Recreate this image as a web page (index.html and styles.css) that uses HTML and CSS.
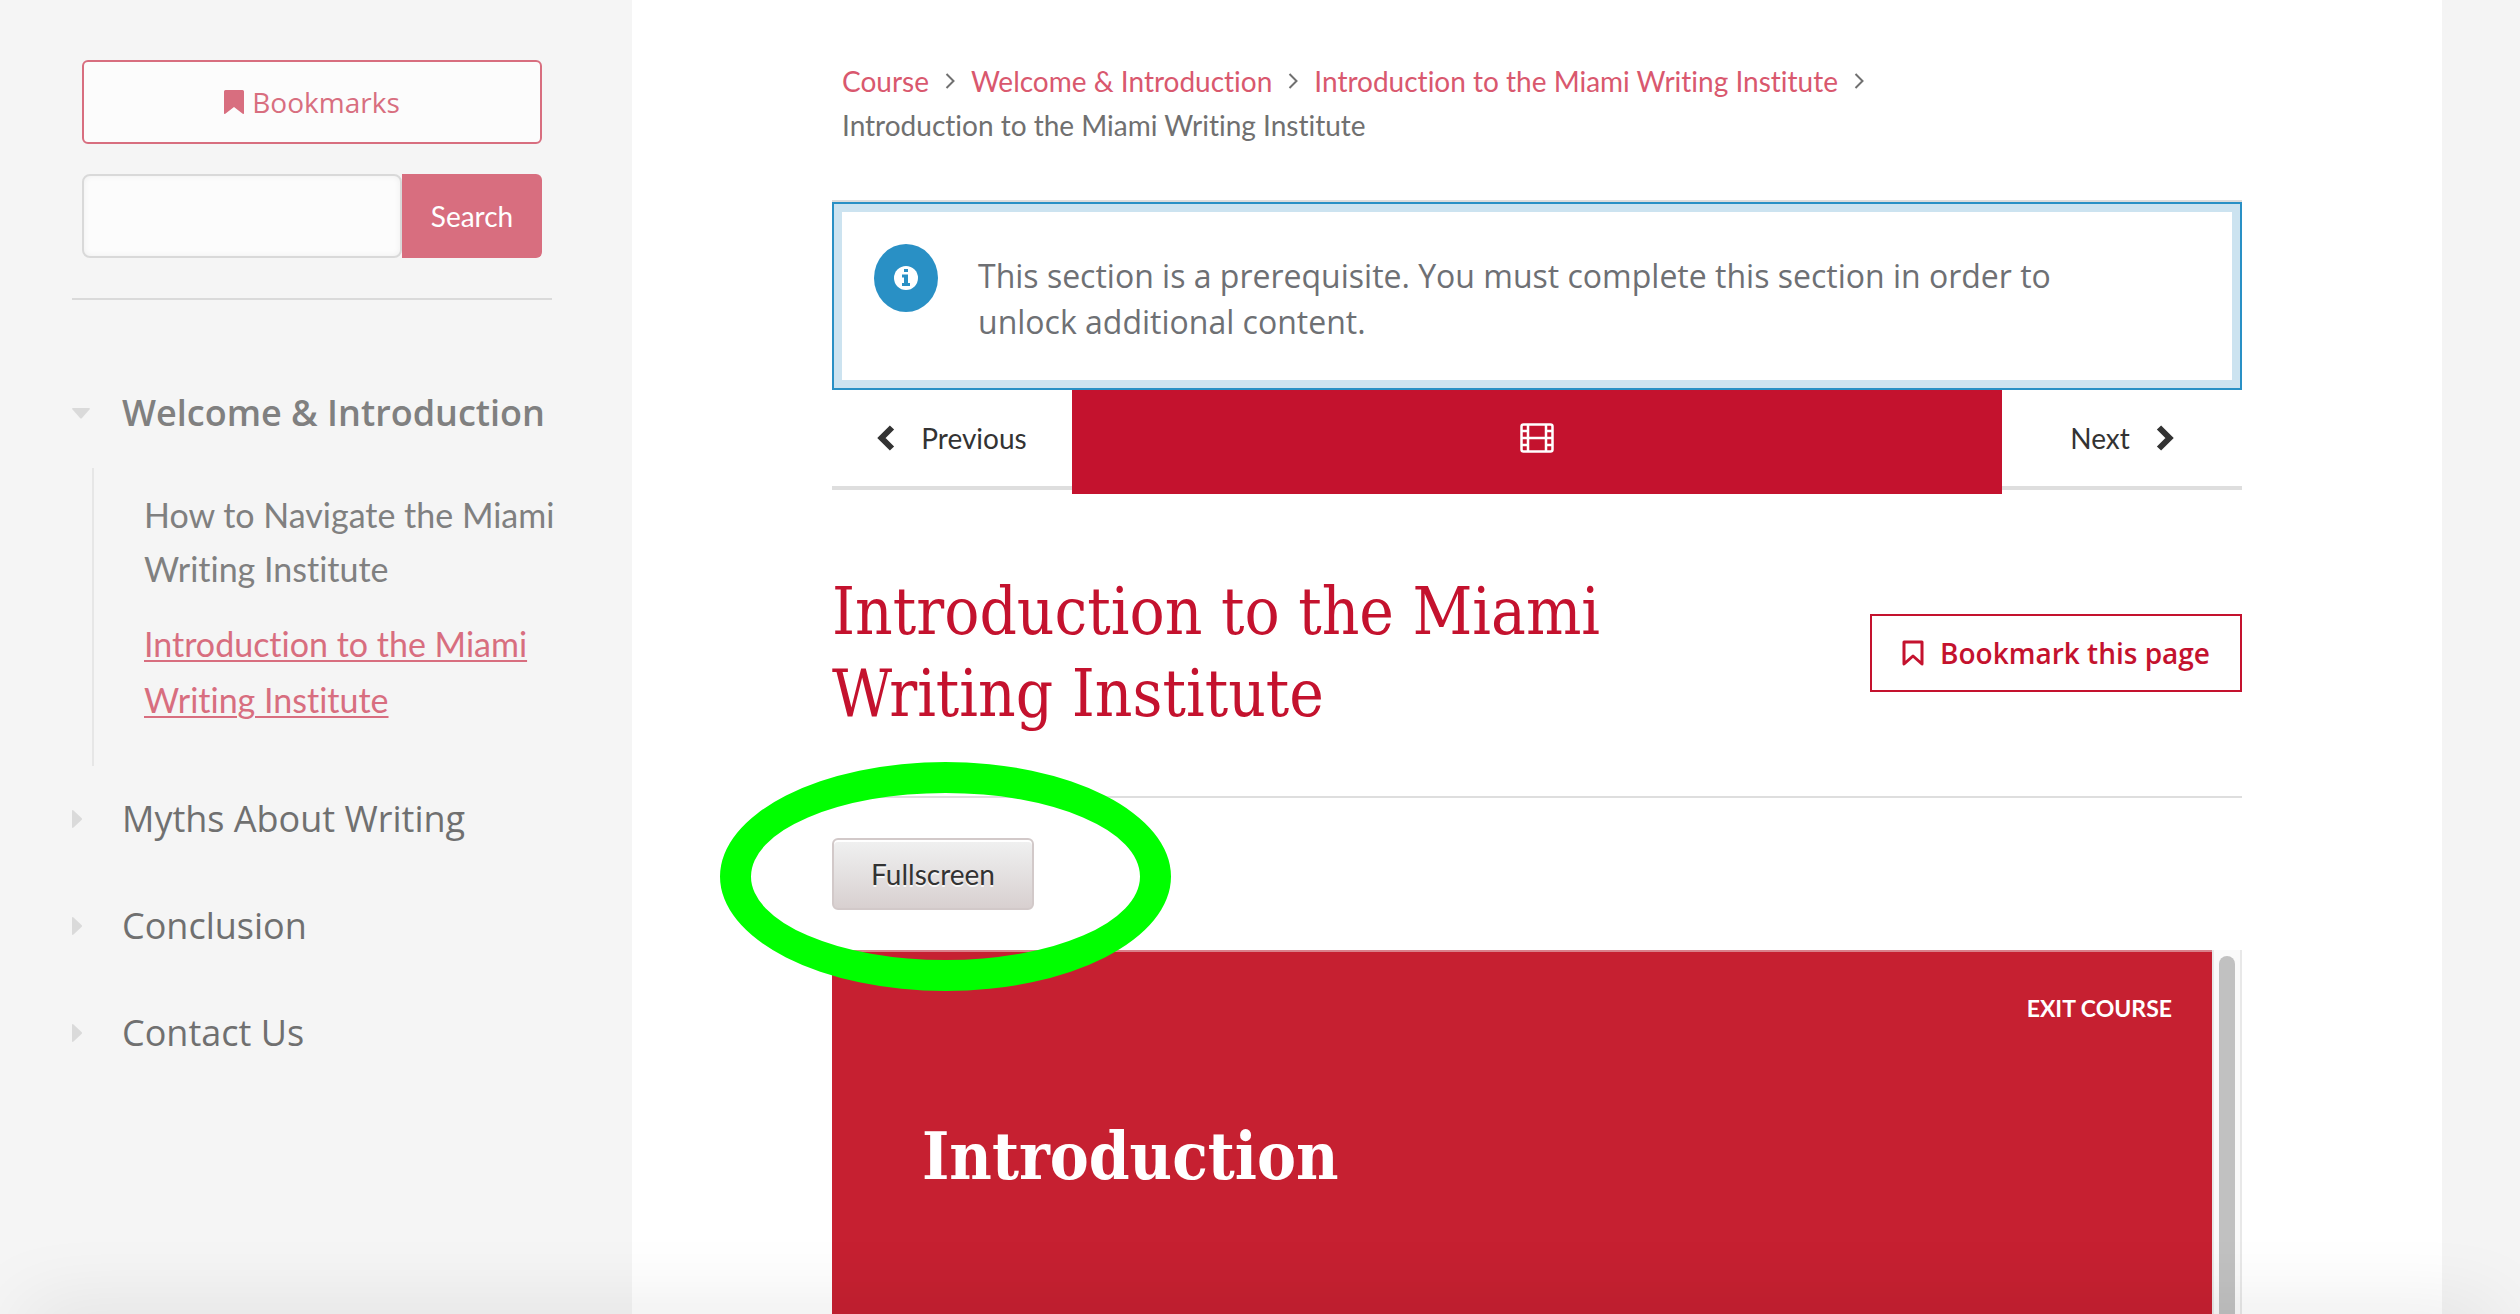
FILE: index.html
```html
<!DOCTYPE html>
<html lang="en">
<head>
<meta charset="utf-8">
<title>Introduction to the Miami Writing Institute</title>
<meta name="viewport" content="width=device-width, initial-scale=1">
<link rel="stylesheet" href="styles.css">
</head>
<body>
<div class="page">
  <aside class="sidebar">
    <div class="tools">
      <a class="bookmarks" href="#bookmarks">
        <svg class="icon-bookmark" viewBox="0 0 20 24" aria-hidden="true"><path d="M1.500 0h17A1.500 1.500 0 0 1 20 1.500V23q0 1.500-1.300.7L10 17l-8.700 6.700Q0 24.500 0 23V1.500A1.500 1.500 0 0 1 1.500 0z" fill="currentColor"/></svg>
        Bookmarks
      </a>
      <form class="search" action="#" role="search">
        <input class="search-input" type="text" name="q" aria-label="Search the course">
        <button class="search-button" type="submit">Search</button>
      </form>
    </div>
    <nav class="outline" aria-label="Course outline">
      <a class="chapter chapter-open" href="#welcome">
        <svg class="caret" viewBox="0 0 18 18" aria-hidden="true"><path d="M1 4h16q1.500 0 .5 1.500L10 14q-1 1-2 0L.5 5.500Q-.5 4 1 4z" fill="currentColor"/></svg>
        Welcome &amp; Introduction
      </a>
      <ul class="lessons">
        <li><a class="lesson" href="#navigate">How to Navigate the Miami Writing Institute</a></li>
        <li><a class="lesson lesson-current" href="#intro">Introduction to the Miami Writing Institute</a></li>
      </ul>
      <a class="chapter" href="#myths">
        <svg class="caret" viewBox="0 0 18 18" aria-hidden="true"><path d="M0 1q0-1.500 1.500-.5L9.500 8q1 1 0 2l-8 7.500Q0 18.500 0 17z" fill="currentColor"/></svg>
        Myths About Writing
      </a>
      <a class="chapter" href="#conclusion">
        <svg class="caret" viewBox="0 0 18 18" aria-hidden="true"><path d="M0 1q0-1.500 1.500-.5L9.500 8q1 1 0 2l-8 7.500Q0 18.500 0 17z" fill="currentColor"/></svg>
        Conclusion
      </a>
      <a class="chapter" href="#contact">
        <svg class="caret" viewBox="0 0 18 18" aria-hidden="true"><path d="M0 1q0-1.500 1.500-.5L9.500 8q1 1 0 2l-8 7.500Q0 18.500 0 17z" fill="currentColor"/></svg>
        Contact Us
      </a>
    </nav>
  </aside>

  <main class="content">
    <nav class="breadcrumbs" aria-label="Breadcrumb">
      <a href="#course">Course</a>
      <svg class="crumb-sep" viewBox="0 0 10 16" aria-hidden="true"><path d="M1.500 1 8.500 8l-7 7" fill="none" stroke="currentColor" stroke-width="2"/></svg>
      <a href="#welcome">Welcome &amp; Introduction</a>
      <svg class="crumb-sep" viewBox="0 0 10 16" aria-hidden="true"><path d="M1.500 1 8.500 8l-7 7" fill="none" stroke="currentColor" stroke-width="2"/></svg>
      <a href="#intro">Introduction to the Miami Writing Institute</a>
      <svg class="crumb-sep" viewBox="0 0 10 16" aria-hidden="true"><path d="M1.500 1 8.500 8l-7 7" fill="none" stroke="currentColor" stroke-width="2"/></svg>
      <span class="crumb-current">Introduction to the Miami Writing Institute</span>
    </nav>

    <div class="alert-frame">
      <div class="alert" role="note">
        <span class="alert-badge">
          <svg class="alert-icon" viewBox="0 0 24 24" aria-hidden="true"><circle cx="12" cy="12" r="12" fill="#fff"/><path d="M10 3h4v3h-4zM8 8.500h6V17h2v3H8v-3h2v-5.500H8z" fill="#2990c5"/></svg>
        </span>
        <p class="alert-text">This section is a prerequisite. You must complete this section in order to unlock additional content.</p>
      </div>
    </div>

    <div class="sequence">
      <button class="step step-prev" type="button">
        <svg class="step-icon" viewBox="0 0 18 26" aria-hidden="true"><path d="M15 2.500 4.500 13 15 23.500" fill="none" stroke="currentColor" stroke-width="6"/></svg>
        Previous
      </button>
      <button class="tab" type="button" aria-label="Video">
        <svg class="film" viewBox="0 0 34 30" aria-hidden="true"><g fill="none" stroke="#fff" stroke-width="2.500"><rect x="1.500" y="1.500" width="31" height="27" rx="2"/><path d="M8 1v28M26 1v28M8 15h18M1 8h7M1 15h7M1 22h7M26 8h7M26 15h7M26 22h7"/></g></svg>
      </button>
      <button class="step step-next" type="button">
        Next
        <svg class="step-icon" viewBox="0 0 18 26" aria-hidden="true"><path d="M3 2.500 13.500 13 3 23.500" fill="none" stroke="currentColor" stroke-width="6"/></svg>
      </button>
    </div>

    <header class="unit-header">
      <h1 class="unit-title">Introduction to the Miami Writing Institute</h1>
      <button class="bookmark-page" type="button">
        <svg class="icon-ribbon" viewBox="0 0 22 26" aria-hidden="true"><path d="M2 2h18v22l-9-8-9 8z" fill="none" stroke="currentColor" stroke-width="3" stroke-linejoin="round"/></svg>
        Bookmark this page
      </button>
    </header>

    <div class="launch">
      <button class="fullscreen" type="button">Fullscreen</button>
      <div class="ring"></div>
    </div>

    <section class="player">
      <div class="slide">
        <a class="exit" href="#exit">EXIT COURSE</a>
        <h2 class="slide-title">Introduction</h2>
      </div>
      <div class="scrollbar"><div class="thumb"></div></div>
    </section>
  </main>
  <div class="shade"></div>
</div>
</body>
</html>
```

FILE: styles.css
```css
* {
  box-sizing: border-box;
}

body {
  margin: 0;
  background: #f4f4f4;
  color: #6e7074;
  font-family: Lato, "Liberation Sans", sans-serif;
  font-size: 28px;
  font-variant-ligatures: none;
  line-height: 44px;
}

button,
input {
  margin: 0;
  font: inherit;
}

a {
  color: #d9586e;
  text-decoration: none;
}

.page {
  position: relative;
  display: grid;
  grid-template-columns: 632px minmax(0, 1fr);
  min-height: 100vh;
  padding-right: 78px;
  overflow: hidden;
}

/* Sidebar */

.sidebar {
  padding: 60px 80px 0 72px;
  background: #f5f5f5;
}

.tools {
  display: flex;
  flex-direction: column;
  gap: 30px;
  padding: 0 10px 40px;
  border-bottom: 2px solid #dadada;
}

.bookmarks {
  display: flex;
  align-items: center;
  justify-content: center;
  gap: 8px;
  height: 84px;
  border: 2px solid #d86e7f;
  border-radius: 6px;
  background: #fcfcfc;
  color: #d86e7f;
  font-family: "Open Sans", sans-serif;
}

.icon-bookmark {
  width: 20px;
  height: 24px;
}

.search {
  display: flex;
  height: 84px;
}

.search-input {
  flex: 1;
  min-width: 0;
  padding: 0 20px;
  border: 2px solid #d9d9d9;
  border-radius: 8px;
  background: #fcfcfc;
  box-shadow: inset 0 0 6px rgba(0, 0, 0, 0.06);
}

.search-button {
  width: 140px;
  padding: 0;
  border: 0;
  border-radius: 0 6px 6px 0;
  background: #d86e7f;
  color: #fff;
}

.outline {
  padding-top: 86px;
}

.chapter {
  display: flex;
  align-items: center;
  gap: 32px;
  height: 54px;
  margin-bottom: 53px;
  color: #707070;
  font-family: "Open Sans", sans-serif;
  font-size: 36px;
  line-height: 54px;
  white-space: nowrap;
}

.chapter-open {
  margin-bottom: 28px;
  color: #808080;
  font-weight: 600;
}

.caret {
  width: 18px;
  height: 18px;
  color: #dadada;
}

.lessons {
  display: flex;
  flex-direction: column;
  gap: 20px;
  margin: 0 -10px 26px 20px;
  padding: 20px 0 38px 50px;
  border-left: 2px solid #e6e6e6;
  list-style: none;
  font-size: 34px;
  line-height: 54px;
}

.lesson {
  color: #808080;
}

.lesson-current {
  color: #d86e7f;
  text-decoration: underline;
  text-decoration-thickness: 2px;
  text-underline-offset: 3px;
  line-height: 56px;
}

/* Main column */

.content {
  display: flex;
  flex-direction: column;
  padding: 59px 200px 0;
  background: #fff;
}

.breadcrumbs {
  display: flex;
  flex-wrap: wrap;
  align-items: center;
  column-gap: 16px;
  margin-bottom: 53px;
  padding: 0 10px;
}

.crumb-sep {
  width: 10px;
  height: 16px;
  color: #707070;
}

.crumb-current {
  color: #707070;
}

.alert-frame {
  padding-top: 2px;
  background: #dcdcdc;
}

.alert {
  display: flex;
  align-items: flex-start;
  gap: 40px;
  padding: 40px;
  border: 2px solid #2990c5;
  background: #fff;
  box-shadow: inset 0 0 0 8px #cce3f0;
}

.alert-badge {
  display: flex;
  align-items: center;
  justify-content: center;
  flex: none;
  width: 64px;
  height: 68px;
  border-radius: 50%;
  background: #2990c5;
}

.alert-icon {
  width: 24px;
  height: 24px;
}

.alert-text {
  margin: 0;
  max-width: 1150px;
  padding: 9px 0 3px;
  font-family: "Open Sans", sans-serif;
  font-size: 32px;
  line-height: 46px;
}

.sequence {
  display: flex;
  align-items: flex-start;
}

.step {
  display: flex;
  align-items: center;
  justify-content: center;
  gap: 26px;
  width: 240px;
  height: 100px;
  padding: 0;
  border: 0 solid #dedede;
  border-bottom-width: 4px;
  background: #fff;
  color: #333;
}

.step-icon {
  width: 18px;
  height: 26px;
}

.tab {
  display: flex;
  align-items: center;
  justify-content: center;
  flex: 1;
  height: 104px;
  padding: 0 0 8px;
  border: 0;
  background: #c4122e;
}

.film {
  width: 34px;
  height: 30px;
}

.unit-header {
  display: flex;
  align-items: center;
  justify-content: space-between;
  gap: 40px;
  padding: 77px 0 61px;
  border-bottom: 2px solid #dedede;
}

.unit-title {
  flex: 1;
  max-width: 800px;
  margin: 0;
  color: #c4122e;
  font-family: "Roboto Slab", "DejaVu Serif Condensed", "DejaVu Serif", serif;
  font-size: 65px;
  font-weight: 300;
  line-height: 82px;
}

.bookmark-page {
  display: flex;
  align-items: center;
  gap: 16px;
  height: 78px;
  padding: 0 30px;
  border: 2px solid #c4122e;
  background: #fff;
  color: #c4122e;
  font-family: "Open Sans", sans-serif;
  font-weight: 600;
  white-space: nowrap;
}

.icon-ribbon {
  width: 22px;
  height: 26px;
}

.launch {
  position: relative;
  align-self: flex-start;
  margin: 40px 0;
}

.fullscreen {
  display: block;
  width: 202px;
  height: 72px;
  padding: 0;
  border: 2px solid #d2c9c9;
  border-radius: 6px;
  background: linear-gradient(#f0f1f1, #d8d0d0);
  box-shadow: inset 0 2px 0 #fff;
  color: #333;
  text-shadow: 0 2px 0 #f8f8f8;
}

.ring {
  position: absolute;
  top: -76px;
  left: -112px;
  z-index: 2;
  width: 451px;
  height: 229px;
  border: 31px solid #0f0;
  border-radius: 50%;
  pointer-events: none;
}

.player {
  display: flex;
  flex: 1;
  min-height: 364px;
}

.slide {
  flex: 1;
  padding: 34px 40px 0 90px;
  border-top: 2px solid #d9808a;
  background: #c62031;
  color: #fff;
}

.exit {
  display: block;
  color: #fff;
  font-size: 23px;
  font-weight: 700;
  line-height: 44px;
  text-align: right;
}

.slide-title {
  margin: 84px 0 0;
  font-family: "Roboto Slab", "DejaVu Serif Condensed", "DejaVu Serif", serif;
  font-size: 65px;
  font-weight: 700;
  line-height: 84px;
}

.scrollbar {
  display: flex;
  justify-content: center;
  width: 30px;
  padding-top: 6px;
  border: 0 solid #e8e8e8;
  border-width: 0 2px;
  background: #fafafa;
}

.thumb {
  width: 16px;
  border-radius: 8px 8px 0 0;
  background: #c1c1c1;
}

/* Soft darkening along the bottom edge of the window */
.shade {
  position: absolute;
  right: 24px;
  bottom: -40px;
  left: 24px;
  z-index: 3;
  height: 40px;
  box-shadow: 0 0 80px rgba(0, 0, 0, 0.13);
  pointer-events: none;
}
```
